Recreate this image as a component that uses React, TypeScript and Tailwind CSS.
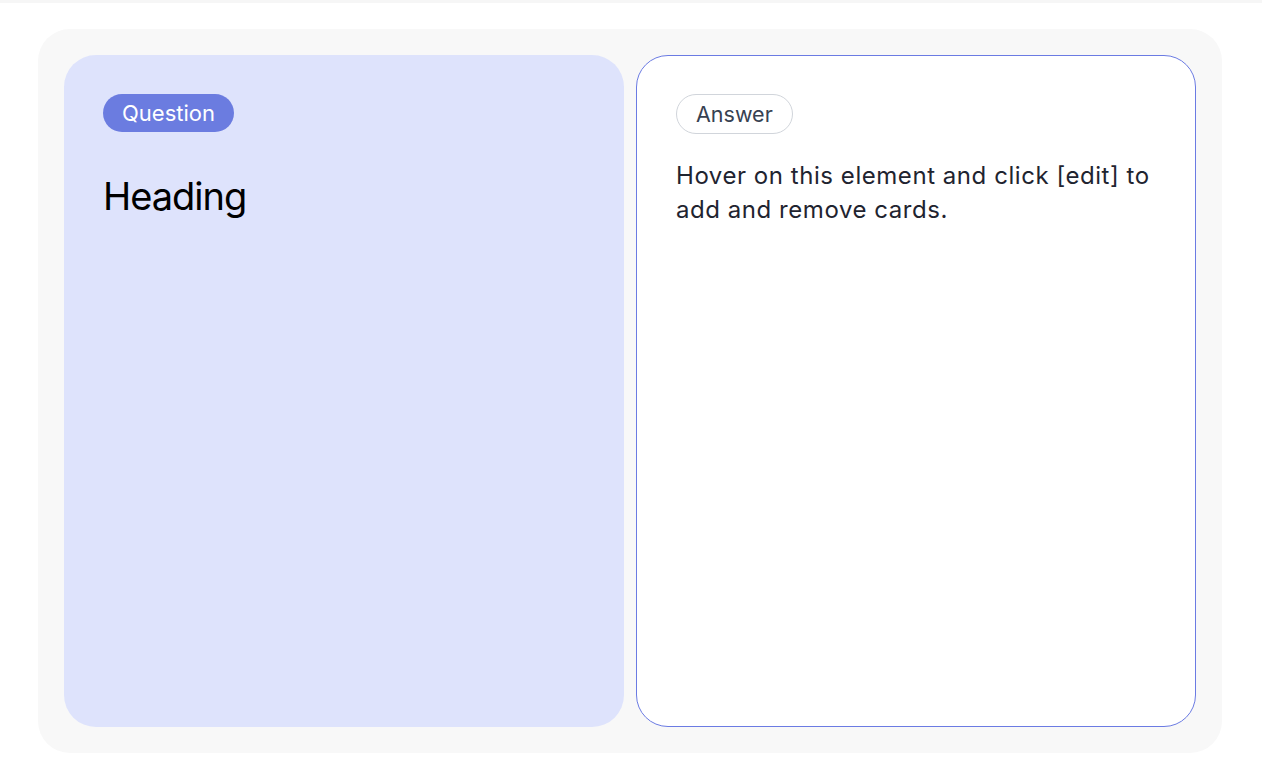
export default function App() {
  return (
    <div className="min-h-[778px] w-full bg-white" style={{ fontFamily: 'Inter, "Noto Sans", sans-serif' }}>
      <div className="h-[3px] w-full bg-[#f6f6f6]" />
      <div className="pl-[38px] pr-[40px] pt-[26px]">
        <div className="flex gap-[12px] rounded-[32px] bg-[#f8f8f8] p-[26px]">
          <div className="h-[672px] w-[560px] shrink-0 rounded-[32px] bg-[#dee3fc] px-[39px] pt-[39px]">
            <span className="inline-flex h-[38px] items-center rounded-full bg-[#6b7ce0] px-[19px] text-[22px] text-white">
              Question
            </span>
            <h1 className="mt-[40px] text-[38px] leading-[48px] tracking-[-1px] text-black">Heading</h1>
          </div>
          <div className="h-[672px] w-[560px] shrink-0 rounded-[32px] border border-[#6b7be3] bg-white px-[39px] pt-[38px]">
            <span className="inline-flex h-[40px] items-center rounded-full border border-[#d1d5db] px-[19px] text-[21.5px] text-[#374151]">
              Answer
            </span>
            <p className="mt-[25px] text-[24px] leading-[34px] tracking-[0.55px] text-[#1f2430]">
              Hover on this element and click [edit] to add and remove cards.
            </p>
          </div>
        </div>
      </div>
    </div>
  );
}
